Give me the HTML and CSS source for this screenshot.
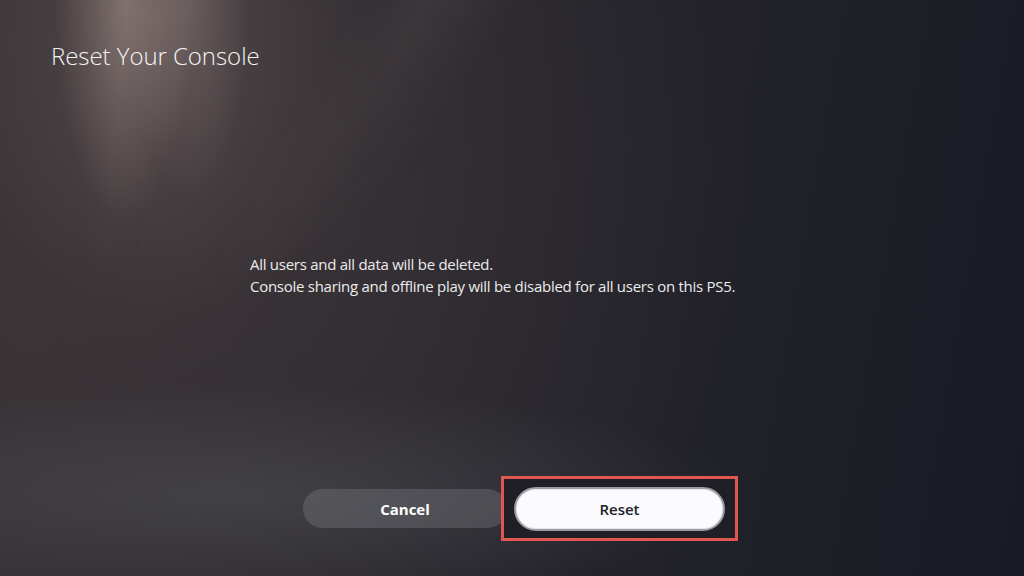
FILE: index.html
```html
<!DOCTYPE html>
<html>
<head>
<meta charset="utf-8">
<link rel="stylesheet" href="styles.css">
</head>
<body>
<div class="screen">
  <div class="rays"></div>
  <h1 class="title">Reset Your Console</h1>
  <div class="message">
    <p>All users and all data will be deleted.</p>
    <p>Console sharing and offline play will be disabled for all users on this PS5.</p>
  </div>
  <div class="actions">
    <button class="btn btn-cancel">Cancel</button>
    <div class="highlight">
      <button class="btn btn-reset">Reset</button>
    </div>
  </div>
</div>
</body>
</html>
```

FILE: styles.css
```css
* { box-sizing: border-box; }
html, body {
  margin: 0;
  padding: 0;
  width: 1024px;
  height: 576px;
  overflow: hidden;
}
body {
  font-family: "Open Sans", "Noto Sans", sans-serif;
  color: #f2f2f2;
}
.screen {
  position: relative;
  width: 1024px;
  height: 576px;
  display: flex;
  flex-direction: column;
  background:
    radial-gradient(ellipse 70px 220px at 125px 0px, rgba(185,165,158,0.45), rgba(185,165,158,0) 100%),
    radial-gradient(ellipse 60px 200px at 190px 0px, rgba(170,150,145,0.30), rgba(170,150,145,0) 100%),
    radial-gradient(ellipse 220px 300px at 160px 20px, rgba(130,112,108,0.32), rgba(130,112,108,0) 100%),
    radial-gradient(ellipse 520px 110px at 230px 495px, rgba(88,92,98,0.40), rgba(88,92,98,0) 100%),
    radial-gradient(ellipse 600px 560px at 150px 200px, rgba(75,64,66,0.50), rgba(75,64,66,0) 100%),
    linear-gradient(100deg, #332e32 0%, #2a282e 40%, #212129 70%, #191a24 100%);
}
.rays {
  position: absolute;
  inset: 0;
  pointer-events: none;
  background:
    linear-gradient(122deg, rgba(0,0,0,0) 26%, rgba(160,140,135,0.10) 31%, rgba(0,0,0,0) 38%),
    linear-gradient(96deg, rgba(0,0,0,0) 9%, rgba(170,150,140,0.08) 12%, rgba(0,0,0,0) 16%);
  -webkit-mask-image: linear-gradient(180deg, #000 0%, rgba(0,0,0,0) 50%);
  mask-image: linear-gradient(180deg, #000 0%, rgba(0,0,0,0) 50%);
}
.title {
  position: relative;
  margin: 40px 0 0 51px;
  font-weight: 300;
  font-size: 24px;
  line-height: 32px;
  letter-spacing: -0.05px;
  color: #f4f4f4;
}
.message {
  position: relative;
  margin: 181px 0 0 250px;
  font-size: 15px;
  line-height: 22px;
  font-weight: 400;
  letter-spacing: -0.27px;
  color: #ececec;
}
.message p { margin: 0; }
.actions {
  position: relative;
  margin: 179px 0 0 303px;
  display: flex;
  align-items: center;
}
.btn {
  font-family: "Open Sans", "Noto Sans", sans-serif;
  font-size: 15px;
  border: none;
  border-radius: 22px;
  cursor: pointer;
}
.btn-cancel {
  width: 204px;
  height: 39px;
  background: rgba(125,127,134,0.36);
  color: #ffffff;
  font-weight: 700;
  padding: 0;
  margin-right: -6px;
}
.highlight {
  border: 3px solid #e0574f;
  padding: 8px 10px 7px 10px;
  background: #1f1f25;
}
.btn-reset {
  display: block;
  width: 211px;
  height: 44px;
  background: #fbfbfd;
  color: #222228;
  font-weight: 600;
  border: 2px solid #9a9ba3;
  box-shadow: inset 0 0 0 1px #e8e8ee;
}
```
